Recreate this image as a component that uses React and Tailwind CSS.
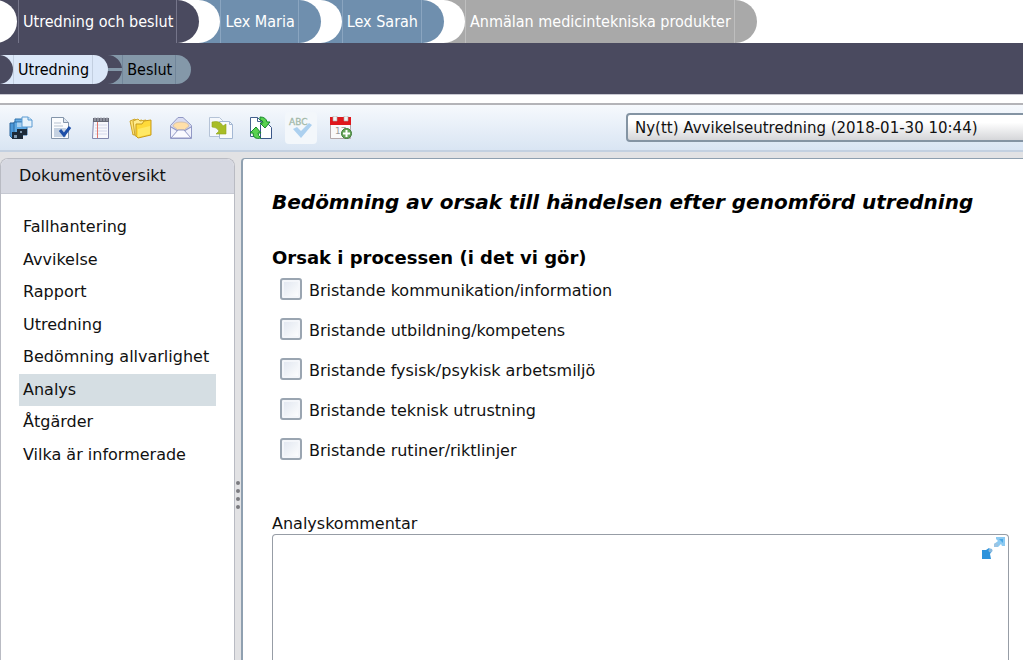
import React, { useState } from "react";

const causes = [
  "Bristande kommunikation/information",
  "Bristande utbildning/kompetens",
  "Bristande fysisk/psykisk arbetsmiljö",
  "Bristande teknisk utrustning",
  "Bristande rutiner/riktlinjer",
];

const sections = [
  "Fallhantering",
  "Avvikelse",
  "Rapport",
  "Utredning",
  "Bedömning allvarlighet",
  "Analys",
  "Åtgärder",
  "Vilka är informerade",
];

const tabs = [
  { label: "Utredning och beslut", bg: "bg-[#4a4a5f]", fill: "#4a4a5f", line: "border-[#75758a]" },
  { label: "Lex Maria", bg: "bg-[#6f8fae]", fill: "#6f8fae", line: "border-[#8aa5c0]" },
  { label: "Lex Sarah", bg: "bg-[#6f8fae]", fill: "#6f8fae", line: "border-[#8aa5c0]" },
  { label: "Anmälan medicintekniska produkter", bg: "bg-[#a9a9a9]", fill: "#a9a9a9", line: "border-[#bebebe]" },
];

// round end of one tab, running into the next one
function TabJoint({ from, to }) {
  return (
    <svg width="43" height="43" viewBox="0 0 43 43" className="shrink-0">
      <rect width="43" height="43" fill={to} />
      <path d="M0 0H21.5A21.5 21.5 0 0 1 21.5 43H0Z" fill="#fff" />
      <path d="M0 0H.5A21.5 21.5 0 0 1 .5 43H0Z" fill={from} />
    </svg>
  );
}

function MainTabs() {
  return (
    <nav className="flex h-[43px] overflow-hidden bg-white text-[16px] text-white">
      <svg width="18" height="43" viewBox="0 0 18 43" className="shrink-0">
        <rect width="18" height="43" fill="#4a4a5f" />
        <circle cx="-4.5" cy="21.5" r="21.5" fill="#fff" />
      </svg>
      {tabs.map((tab, i) => (
        <React.Fragment key={tab.label}>
          <button className={`shrink-0 whitespace-nowrap border-x pl-1 pr-[3px] ${tab.bg} ${tab.line}`}>{tab.label}</button>
          {i < tabs.length - 1 ? (
            <TabJoint from={tab.fill} to={tabs[i + 1].fill} />
          ) : (
            <svg width="22" height="43" viewBox="0 0 22 43" className="shrink-0">
              <path d="M0 0H.5A21.5 21.5 0 0 1 .5 43H0Z" fill={tab.fill} />
            </svg>
          )}
        </React.Fragment>
      ))}
    </nav>
  );
}

function SubTabs() {
  return (
    <nav className="flex h-[51px] items-center bg-[#4a4a5f] pt-[2px] text-[16px] text-black">
      <svg width="13" height="29" viewBox="0 0 13 29" className="shrink-0">
        <rect width="13" height="29" fill="#dce8f9" />
        <circle cx="-1.5" cy="14.5" r="14.5" fill="#4a4a5f" />
      </svg>
      <button className="h-[29px] whitespace-nowrap border-x border-[#c3cfe0] bg-[#dce8f9] pl-1 pr-[3px]">Utredning</button>
      <svg width="29" height="29" viewBox="0 0 29 29" className="shrink-0">
        <path d="M14.5 0H29V29H14.5A14.5 14.5 0 0 0 14.5 0" fill="#8498a9" />
        <path d="M12 14.5H29" stroke="#8498a9" strokeWidth="3" />
        <path d="M0 0H.5A14.5 14.5 0 0 1 .5 29H0Z" fill="#dce8f9" />
      </svg>
      <button className="h-[29px] whitespace-nowrap border-x border-[#72869a] bg-[#8498a9] pl-1 pr-[3px]">Beslut</button>
      <svg width="15" height="29" viewBox="0 0 15 29" className="shrink-0">
        <path d="M0 0H.5A14.5 14.5 0 0 1 .5 29H0Z" fill="#8498a9" />
      </svg>
    </nav>
  );
}

function SaveIcon() {
  return (
    <svg width="24" height="24" viewBox="0 0 24 24">
      <path d="M6 3H16V14H6Z" fill="#69aee6" stroke="#3375ad" />
      <path d="M1 7H13V22H3L1 20Z" fill="#4c98d8" stroke="#28639a" />
      <path d="M5 6H18V19H5Z" fill="#5ea8e2" stroke="#2d6ba3" />
      <path d="M8 6.5H15V11H8Z" fill="#a9d0ef" />
      <path d="M3 16H14V23H3Z" fill="#1d2a38" />
      <path d="M8 13H18V19H8Z" fill="#1d2a38" />
      <path d="M5 19H8V22H5ZM11 15H13V17H11Z" fill="#7f99b0" />
      <path d="M13 1H19L23 4V11H13Z" fill="#e8f3fb" stroke="#5b9bd3" />
      <path d="M19 1V4H23" fill="#c7e0f4" stroke="#5b9bd3" />
    </svg>
  );
}

function CheckDocIcon() {
  return (
    <svg width="24" height="24" viewBox="0 0 24 24">
      <path d="M2.5 1.5H14.5L19.5 6.5V22.5H2.5Z" fill="#fafcfe" stroke="#8495aa" />
      <path d="M14.5 1.5V6.5H19.5" fill="#dce5ef" stroke="#8495aa" />
      <path d="M5 7H12M5 10H14M5 19H13" stroke="#b8c3d0" />
      <path d="M5 12H17V21H5Z" fill="#c5d2e2" />
      <path d="M11 14L15 19L21 11" fill="none" stroke="#1d4fa8" strokeWidth="3" />
    </svg>
  );
}

function NotepadIcon() {
  return (
    <svg width="24" height="24" viewBox="0 0 24 24">
      <path d="M4.5 3.5H19.5V22.5H3.5Z" fill="#f7f7fc" stroke="#8287ad" />
      <path d="M4 2H20V6H4Z" fill="#666976" />
      <path d="M6 1V5M9 1V5M12 1V5M15 1V5M18 1V5" stroke="#b4b7c2" />
      <path d="M6 9H18M6 12H18M6 15H18M6 18H18" stroke="#d3d7ea" />
      <path d="M8.5 6V22" stroke="#e2776c" />
    </svg>
  );
}

function FoldersIcon() {
  return (
    <svg width="24" height="24" viewBox="0 0 24 24">
      <path d="M1 5L6 3L8 5L13 4L15 15L4 19Z" fill="#ffe477" stroke="#cda52b" />
      <path d="M4 5L9 3L11 5L17 4V17L6 20Z" fill="#ffec8d" stroke="#cda52b" />
      <path d="M7 8H13L15 5L22 4V19L9 22L7 20Z" fill="#ffda39" stroke="#c79b1c" />
      <path d="M9 13L21 10V18L9 21Z" fill="#ffe965" />
    </svg>
  );
}

function MailIcon() {
  return (
    <svg width="24" height="24" viewBox="0 0 24 24">
      <path d="M1.5 9.5L9 1.5H14L22.5 9.5V22.5H1.5Z" fill="#d9dcf2" stroke="#9299c5" />
      <path d="M4 10Q5 6 12 6T20 10L15 14H9Z" fill="#ffdfa8" stroke="#c9b6a4" strokeWidth=".7" />
      <path d="M2 11L9 15H15L22 11V22H2Z" fill="#f1f2fc" />
      <path d="M2 11L9 15M15 15L22 11" fill="none" stroke="#9299c5" strokeWidth="1.2" />
      <path d="M2 22L9 14H15L22 22Z" fill="#fafaff" stroke="#9299c5" />
    </svg>
  );
}

function CopyIcon() {
  return (
    <svg width="24" height="24" viewBox="0 0 24 24">
      <path d="M.5 1.5H10.5L13.5 4.5V20.5H.5Z" fill="#f5f8fc" stroke="#b5c3d7" />
      <path d="M10.5 5.5H20.5L23.5 8.5V22.5H10.5Z" fill="#f8fafd" stroke="#a4b8d4" />
      <path d="M20.5 5.5V8.5H23.5" fill="none" stroke="#a4b8d4" />
      <path d="M3 6Q11 4 14 10L17 8V18H7L10 15Q8 11 3 11Z" fill="#a8bd27" stroke="#8da41d" strokeWidth=".6" />
    </svg>
  );
}

function SyncIcon() {
  return (
    <svg width="24" height="24" viewBox="0 0 24 24">
      <path d="M1.5 1.5H8.5L12.5 5.5V20.5H1.5Z" fill="#fff" stroke="#44608e" />
      <path d="M8.5 1.5V5.5H12.5" fill="none" stroke="#44608e" />
      <path d="M11.5 8.5H19.5L22.5 11.5V22.5H11.5Z" fill="#fff" stroke="#3b5789" />
      <path d="M11 1Q17 1 18 6H21L16 12L11 7H14Q14 4 11 4Z" fill="#5ad24f" stroke="#16882c" />
      <path d="M7 11L12 17H9Q9 20 12 22Q4 24 4 17H1Z" fill="#5ad24f" stroke="#16882c" />
    </svg>
  );
}

function SpellIcon() {
  return (
    <svg width="26" height="24" viewBox="0 0 26 24">
      <text x="1" y="9" fontSize="9" fill="#a3b9aa" stroke="#a3b9aa" strokeWidth=".3">ABC</text>
      <path d="M5 13L9 11L13 15L21 7L24 9L13 22Z" fill="#acd0ef" />
    </svg>
  );
}

function CalendarIcon() {
  return (
    <svg width="24" height="24" viewBox="0 0 24 24">
      <path d="M1.5 2.5H21.5V22.5H1.5Z" fill="#fafafa" stroke="#b3a9ab" />
      <path d="M1 1H22V9H1Z" fill="#df171c" />
      <path d="M4 0H8V5H4ZM15 0H19V5H15Z" fill="#f2f2f2" stroke="#aaa" strokeWidth=".6" />
      <text x="6" y="18" fontSize="9" fill="#999">17</text>
      <circle cx="17.5" cy="17.5" r="5" fill="#69a75b" stroke="#3e7937" />
      <path d="M17.5 14V21M14 17.5H21" stroke="#fff" strokeWidth="2" />
    </svg>
  );
}

const tools = [
  { name: "Spara", icon: <SaveIcon /> },
  { name: "Signera", icon: <CheckDocIcon /> },
  { name: "Anteckningar", icon: <NotepadIcon /> },
  { name: "Mappar", icon: <FoldersIcon /> },
  { name: "Skicka", icon: <MailIcon /> },
  { name: "Kopiera", icon: <CopyIcon /> },
  { name: "Uppdatera", icon: <SyncIcon /> },
  { name: "Stavningskontroll", icon: <SpellIcon />, off: true },
  { name: "Bevakning", icon: <CalendarIcon /> },
];

function Toolbar() {
  return (
    <div className="flex h-[49px] items-center justify-between overflow-hidden border-b-2 border-t-2 border-b-[#c3d0e0] border-t-[#b4b4b8] bg-gradient-to-b from-[#f6f9fd] to-[#d9e5f3] pl-[5px]">
      <div className="flex gap-2">
        {tools.map((tool) => (
          <button
            key={tool.name}
            aria-label={tool.name}
            disabled={tool.off}
            className={`flex size-8 items-center justify-center rounded ${tool.off ? "bg-[#f3f7fb]" : ""}`}
          >
            {tool.icon}
          </button>
        ))}
      </div>
      <select
        aria-label="Dokument"
        className="-mr-2 h-[29px] w-[405px] appearance-none rounded border-2 border-[#8494a3] bg-gradient-to-b from-white from-30% to-[#d5d6d9] px-[7px] text-[15px] leading-6 text-[#111]"
      >
        <option>Ny(tt) Avvikelseutredning (2018-01-30 10:44)</option>
      </select>
    </div>
  );
}

function Sidebar({ active, onSelect }) {
  return (
    <aside className="w-[235px] shrink-0 overflow-hidden rounded-t-lg border border-b-0 border-[#b9bbc3] bg-white">
      <h2 className="h-[35px] border-b border-[#c6c9d2] bg-[#d6d8e1] pl-[18px] text-[16px] leading-[34px]">Dokumentöversikt</h2>
      <ul className="mx-[18px] mt-[17px] grid h-[260px] auto-rows-fr">
        {sections.map((s) => (
          <li key={s} className={s === active ? "bg-[#d5dee3]" : ""}>
            <button onClick={() => onSelect(s)} className="h-full w-full whitespace-nowrap px-1 text-left text-[16px]">
              {s}
            </button>
          </li>
        ))}
      </ul>
    </aside>
  );
}

export default function App() {
  const [active, setActive] = useState("Analys");
  const [comment, setComment] = useState("");

  return (
    <div className="flex h-screen flex-col overflow-hidden bg-white font-['Verdana','DejaVu_Sans',sans-serif] text-[#111]">
      <header className="font-['Tahoma','DejaVu_Sans_Condensed','Noto_Sans',sans-serif]">
        <MainTabs />
        <SubTabs />
      </header>
      <div className="h-[9px] shrink-0 border-t border-[#c9c9d2]" />
      <Toolbar />
      <div className="flex min-h-0 flex-1 bg-[#e2e2e4] pt-[6px]">
        <Sidebar active={active} onSelect={setActive} />
        <div className="flex w-[6px] shrink-0 flex-col items-center gap-1 pt-[323px]">
          {[0, 1, 2, 3].map((n) => (
            <span key={n} className="size-1 shrink-0 rounded-full bg-[#7b7b80]" />
          ))}
        </div>
        <main className="flex min-w-0 flex-1 flex-col rounded-tl border-l-2 border-t border-[#8fa0b0] bg-white pl-[29px] pr-[14px] pt-[27px]">
          <h1 className="whitespace-nowrap text-[20px] font-bold italic leading-8 text-black">
            Bedömning av orsak till händelsen efter genomförd utredning
          </h1>
          <fieldset className="mt-[26px]">
            <legend className="text-[18px] font-bold leading-[28px] text-black">Orsak i processen (i det vi gör)</legend>
            {causes.map((cause) => (
              <label key={cause} className="flex h-10 items-start gap-[7px] pl-2 text-[16px] leading-6">
                <input
                  type="checkbox"
                  className="mt-[6px] size-[22px] shrink-0 appearance-none rounded-[3px] border-2 border-[#9aa5b1] bg-gradient-to-br from-[#dfe5ef] to-white shadow-[inset_0_0_0_2px_#f4f6fa] checked:bg-[#6f8fae]"
                />
                <span className="pt-[7px]">{cause}</span>
              </label>
            ))}
          </fieldset>
          <label htmlFor="comment" className="mt-[42px] text-[16px] leading-[20px]">
            Analyskommentar
          </label>
          <div className="relative min-h-0 flex-1">
            <textarea
              id="comment"
              value={comment}
              onChange={(e) => setComment(e.target.value)}
              className="block h-full w-full resize-none rounded-t border border-b-0 border-[#979da6] p-2 pr-10 text-[16px] outline-none"
            />
            <button aria-label="Förstora" className="absolute right-[3px] top-[2px]">
              <svg width="24" height="24" viewBox="0 0 24 24">
                <path d="M14 1H23V10H20L19 8L16 11L12 11V8L16 5L14 3Z" fill="#8ccaf2" />
                <path d="M17 3H21V7Z" fill="#4ba8e6" />
                <circle cx="14" cy="9" r="2" fill="#9fc3e0" />
                <path d="M0 14H4L7 12L10 15L8 18L9 23H0Z" fill="#2d93dc" />
                <circle cx="8.5" cy="14.5" r="2" fill="#87b8dd" />
              </svg>
            </button>
          </div>
        </main>
      </div>
    </div>
  );
}
